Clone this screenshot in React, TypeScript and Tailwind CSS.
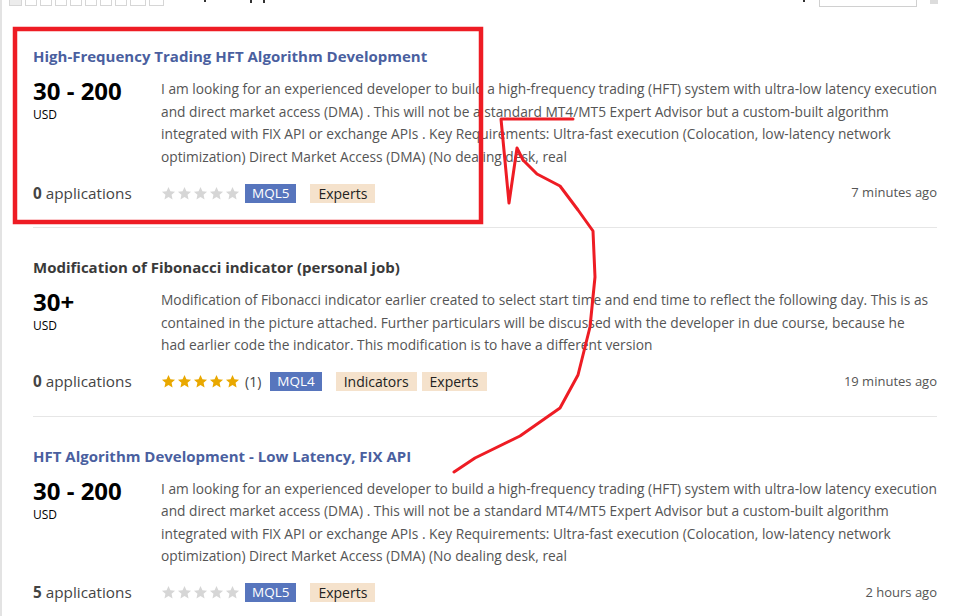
import React from "react";

const FONT = { fontFamily: '"Open Sans", "Liberation Sans", sans-serif' };

function Stars({ filled }: { filled: boolean }) {
  const color = filled ? "#e9a800" : "#d6d6d6";
  return (
    <div className="flex items-center gap-[1px]">
      {[0, 1, 2, 3, 4].map((i) => (
        <svg key={i} width="15" height="15" viewBox="0 0 24 24">
          <polygon
            points="12,1.5 15.1,8.4 22.5,9.1 16.9,14.1 18.5,21.5 12,17.7 5.5,21.5 7.1,14.1 1.5,9.1 8.9,8.4"
            fill={color}
          />
        </svg>
      ))}
    </div>
  );
}

type Job = {
  title: string;
  blue: boolean;
  price: string;
  lines: string[];
  apps: string;
  filled: boolean;
  rating?: string;
  lang: string;
  tags: string[];
  time: string;
  sep: boolean;
};

const jobs: Job[] = [
  {
    title: "High-Frequency Trading HFT Algorithm Development",
    blue: true,
    price: "30 - 200",
    lines: [
      "I am looking for an experienced developer to build a high-frequency trading (HFT) system with ultra-low latency execution",
      "and direct market access (DMA) . This will not be a standard MT4/MT5 Expert Advisor but a custom-built algorithm",
      "integrated with FIX API or exchange APIs . Key Requirements: Ultra-fast execution (Colocation, low-latency network",
      "optimization) Direct Market Access (DMA) (No dealing desk, real",
    ],
    apps: "0",
    filled: false,
    lang: "MQL5",
    tags: ["Experts"],
    time: "7 minutes ago",
    sep: true,
  },
  {
    title: "Modification of Fibonacci indicator (personal job)",
    blue: false,
    price: "30+",
    lines: [
      "Modification of Fibonacci indicator earlier created to select start time and end time to reflect the following day. This is as",
      "contained in the picture attached. Further particulars will be discussed with the developer in due course, because he",
      "had earlier code the indicator. This modification is to have a different version",
    ],
    apps: "0",
    filled: true,
    rating: "(1)",
    lang: "MQL4",
    tags: ["Indicators", "Experts"],
    time: "19 minutes ago",
    sep: true,
  },
  {
    title: "HFT Algorithm Development - Low Latency, FIX API",
    blue: true,
    price: "30 - 200",
    lines: [
      "I am looking for an experienced developer to build a high-frequency trading (HFT) system with ultra-low latency execution",
      "and direct market access (DMA) . This will not be a standard MT4/MT5 Expert Advisor but a custom-built algorithm",
      "integrated with FIX API or exchange APIs . Key Requirements: Ultra-fast execution (Colocation, low-latency network",
      "optimization) Direct Market Access (DMA) (No dealing desk, real",
    ],
    apps: "5",
    filled: false,
    lang: "MQL5",
    tags: ["Experts"],
    time: "2 hours ago",
    sep: false,
  },
];

function Card({ job }: { job: Job }) {
  return (
    <div className={`pt-[28px] pb-[23px] ${job.sep ? "border-b border-[#e6e6e6]" : ""}`}>
      <div
        className={`text-[15px] font-bold leading-[22px] ${job.blue ? "text-[#4a5f9f]" : "text-[#3a3a3a]"}`}
      >
        {job.title}
      </div>
      <div className="mt-[11px] flex">
        <div className="w-[128px] shrink-0 text-black">
          <div className="text-[24px] font-bold leading-[26px]">{job.price}</div>
          <div className="mt-[4px] text-[12px] leading-[14px]">USD</div>
        </div>
        <div className="flex-1 text-[13.75px] leading-[22.5px] text-[#555]">
          {job.lines.map((l, i) => (
            <div key={i} className="whitespace-nowrap">
              {l}
            </div>
          ))}
        </div>
      </div>
      <div className="mt-[14px] flex h-[22px] items-center">
        <div className="w-[128px] shrink-0 text-[15.3px] text-[#444]">
          <span className="font-bold">{job.apps}</span> applications
        </div>
        <Stars filled={job.filled} />
        {job.rating && <span className="ml-[5px] text-[14px] text-[#444]">{job.rating}</span>}
        <span className={`${job.rating ? "ml-[9px]" : "ml-[5px]"} bg-[#5775bd] px-[7px] text-[13.5px] leading-[19px] text-white`}>
          {job.lang}
        </span>
        <div className="ml-[14px] flex gap-[5px]">
          {job.tags.map((t) => (
            <span key={t} className="bg-[#f5e2cc] px-[8px] text-[14px] leading-[19px] text-[#222]">
              {t}
            </span>
          ))}
        </div>
        <div className="flex-1 text-right text-[13px] text-[#555]">{job.time}</div>
      </div>
    </div>
  );
}

export default function App() {
  const boxes = [13, 12, 12, 12, 12, 12, 12, 12, 16, 15];
  return (
    <div className="relative h-[616px] w-[956px] overflow-hidden border-l-2 border-[#e3e3e3] bg-white" style={FONT}>
      <div className="flex h-[6px] items-start">
        <div className="ml-[7px] flex gap-[3px]">
          {boxes.map((w, i) => (
            <div
              key={i}
              className={`h-[6px] border border-t-0 border-[#d6d6d6] ${i === 0 ? "bg-[#ececec]" : "bg-white"}`}
              style={{ width: w }}
            />
          ))}
        </div>
        <div className="ml-[40px] h-[2px] w-[2px] bg-[#333]" />
        <div className="ml-[44px] h-[3px] w-[2px] bg-[#333]" />
        <div className="ml-[11px] h-[3px] w-[2px] bg-[#333]" />
        <div className="ml-[538px] h-[2px] w-[2px] bg-[#333]" />
        <div className="ml-[14px] h-[7px] w-[98px] border border-t-0 border-[#d0d0d0]" />
        <div className="ml-[13px] h-[4px] w-[8px] bg-[#dcdcdc]" />
      </div>
      <div className="ml-[31px] mr-[19px] mt-[11px]">
        {jobs.map((j, i) => (
          <Card key={i} job={j} />
        ))}
      </div>
      <svg
        className="pointer-events-none absolute left-[-2px] top-0"
        width="956"
        height="616"
        viewBox="0 0 956 616"
      >
        <rect x="15" y="29" width="466" height="193" fill="none" stroke="#ee1c24" strokeWidth="4.5" />
        <polyline
          points="573,119 501,119 509,203 517,148 523,160 537,174 560,186 578,210 593,231 595,277 590,327 578,375 560,408 520,436 475,458 454,472"
          fill="none"
          stroke="#ee1c24"
          strokeWidth="3"
          strokeLinejoin="round"
          strokeLinecap="round"
        />
      </svg>
    </div>
  );
}
